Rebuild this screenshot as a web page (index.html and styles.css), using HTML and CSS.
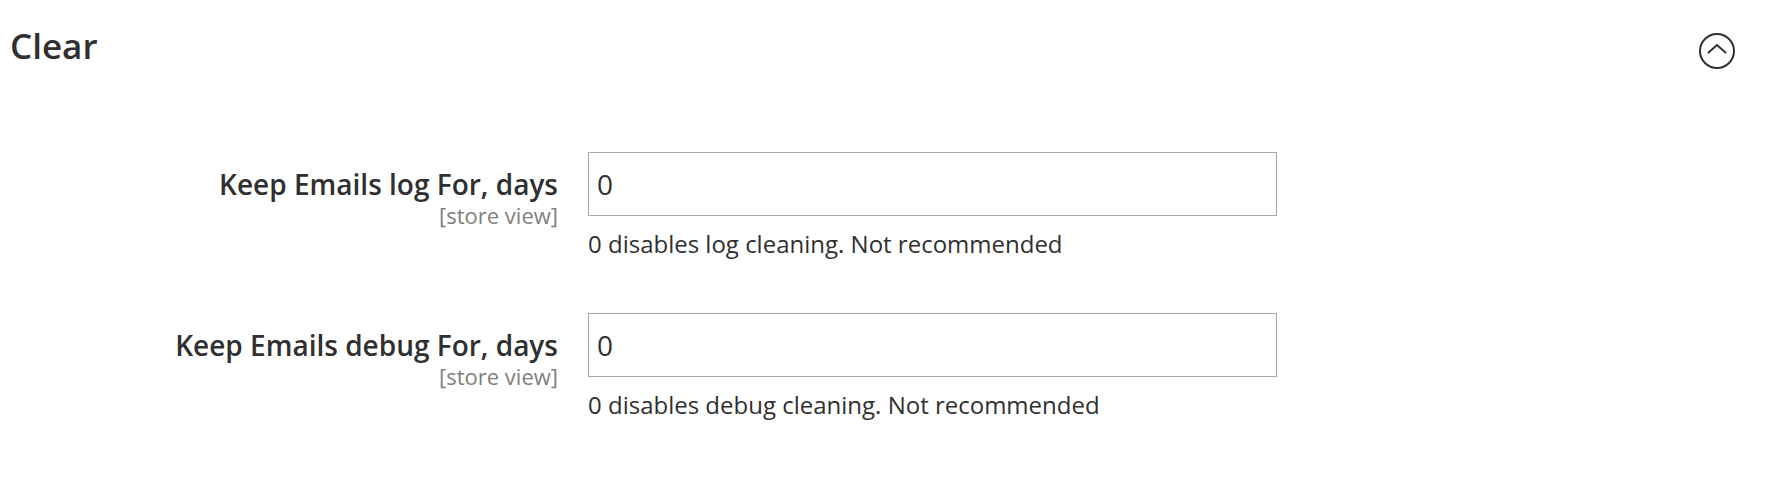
FILE: index.html
```html
<!DOCTYPE html>
<html lang="en">
<head>
<meta charset="utf-8">
<title>Clear</title>
<link rel="stylesheet" href="styles.css">
</head>
<body>
<section class="section">
  <header class="section-header">
    <h2 class="section-title">Clear</h2>
    <button class="collapse-btn" type="button" aria-label="Collapse">
      <svg width="36" height="36" viewBox="0 0 36 36" aria-hidden="true">
        <circle cx="18" cy="18" r="17" fill="none" stroke="#303030" stroke-width="2"/>
        <polyline points="9,20 18,12 27,20" fill="none" stroke="#303030" stroke-width="2"/>
      </svg>
    </button>
  </header>
  <div class="fields">
    <div class="field-row">
      <div class="field-label">
        <label class="label-text" for="keep-log">Keep Emails log For, days</label>
        <span class="scope">[store view]</span>
      </div>
      <div class="field-control">
        <input class="text-input" id="keep-log" type="text" value="0">
        <p class="note">0 disables log cleaning. Not recommended</p>
      </div>
    </div>
    <div class="field-row">
      <div class="field-label">
        <label class="label-text" for="keep-debug">Keep Emails debug For, days</label>
        <span class="scope">[store view]</span>
      </div>
      <div class="field-control">
        <input class="text-input" id="keep-debug" type="text" value="0">
        <p class="note">0 disables debug cleaning. Not recommended</p>
      </div>
    </div>
  </div>
</section>
</body>
</html>
```

FILE: styles.css
```css
* { box-sizing: border-box; }
html, body { margin: 0; padding: 0; background: #ffffff; }
body {
  font-family: "Open Sans", "Noto Sans", sans-serif;
  color: #303030;
}
.section { padding: 22px 47px 0 10px; }
.section-header {
  display: flex;
  justify-content: space-between;
  align-items: flex-start;
  height: 48px;
}
.section-title {
  margin: 0;
  font-size: 35px;
  line-height: 48px;
  font-weight: 600;
  color: #303030;
}
.collapse-btn {
  margin-top: 11px;
  padding: 0;
  border: 0;
  background: transparent;
  width: 36px;
  height: 36px;
  display: block;
}
.collapse-btn svg { display: block; }
.fields {
  margin-left: -10px;
  padding-top: 82px;
  display: flex;
  flex-direction: column;
  gap: 53px;
}
.field-row {
  display: grid;
  grid-template-columns: 558px 689px;
  column-gap: 30px;
}
.field-label {
  padding-top: 14px;
  display: flex;
  flex-direction: column;
  align-items: flex-end;
  text-align: right;
}
.label-text {
  font-size: 28px;
  line-height: 36px;
  font-weight: 600;
  color: #303030;
}
.scope {
  font-size: 22px;
  line-height: 26px;
  color: #808080;
}
.field-control { display: flex; flex-direction: column; }
.text-input {
  width: 689px;
  height: 64px;
  border: 1px solid #a8a8a8;
  border-radius: 0;
  padding: 0 8px;
  font-family: "Open Sans", "Noto Sans", sans-serif;
  font-size: 28px;
  color: #303030;
  background: #fff;
  outline: none;
}
.note {
  margin: 12px 0 0 0;
  font-size: 24px;
  line-height: 32px;
  color: #303030;
}
```
